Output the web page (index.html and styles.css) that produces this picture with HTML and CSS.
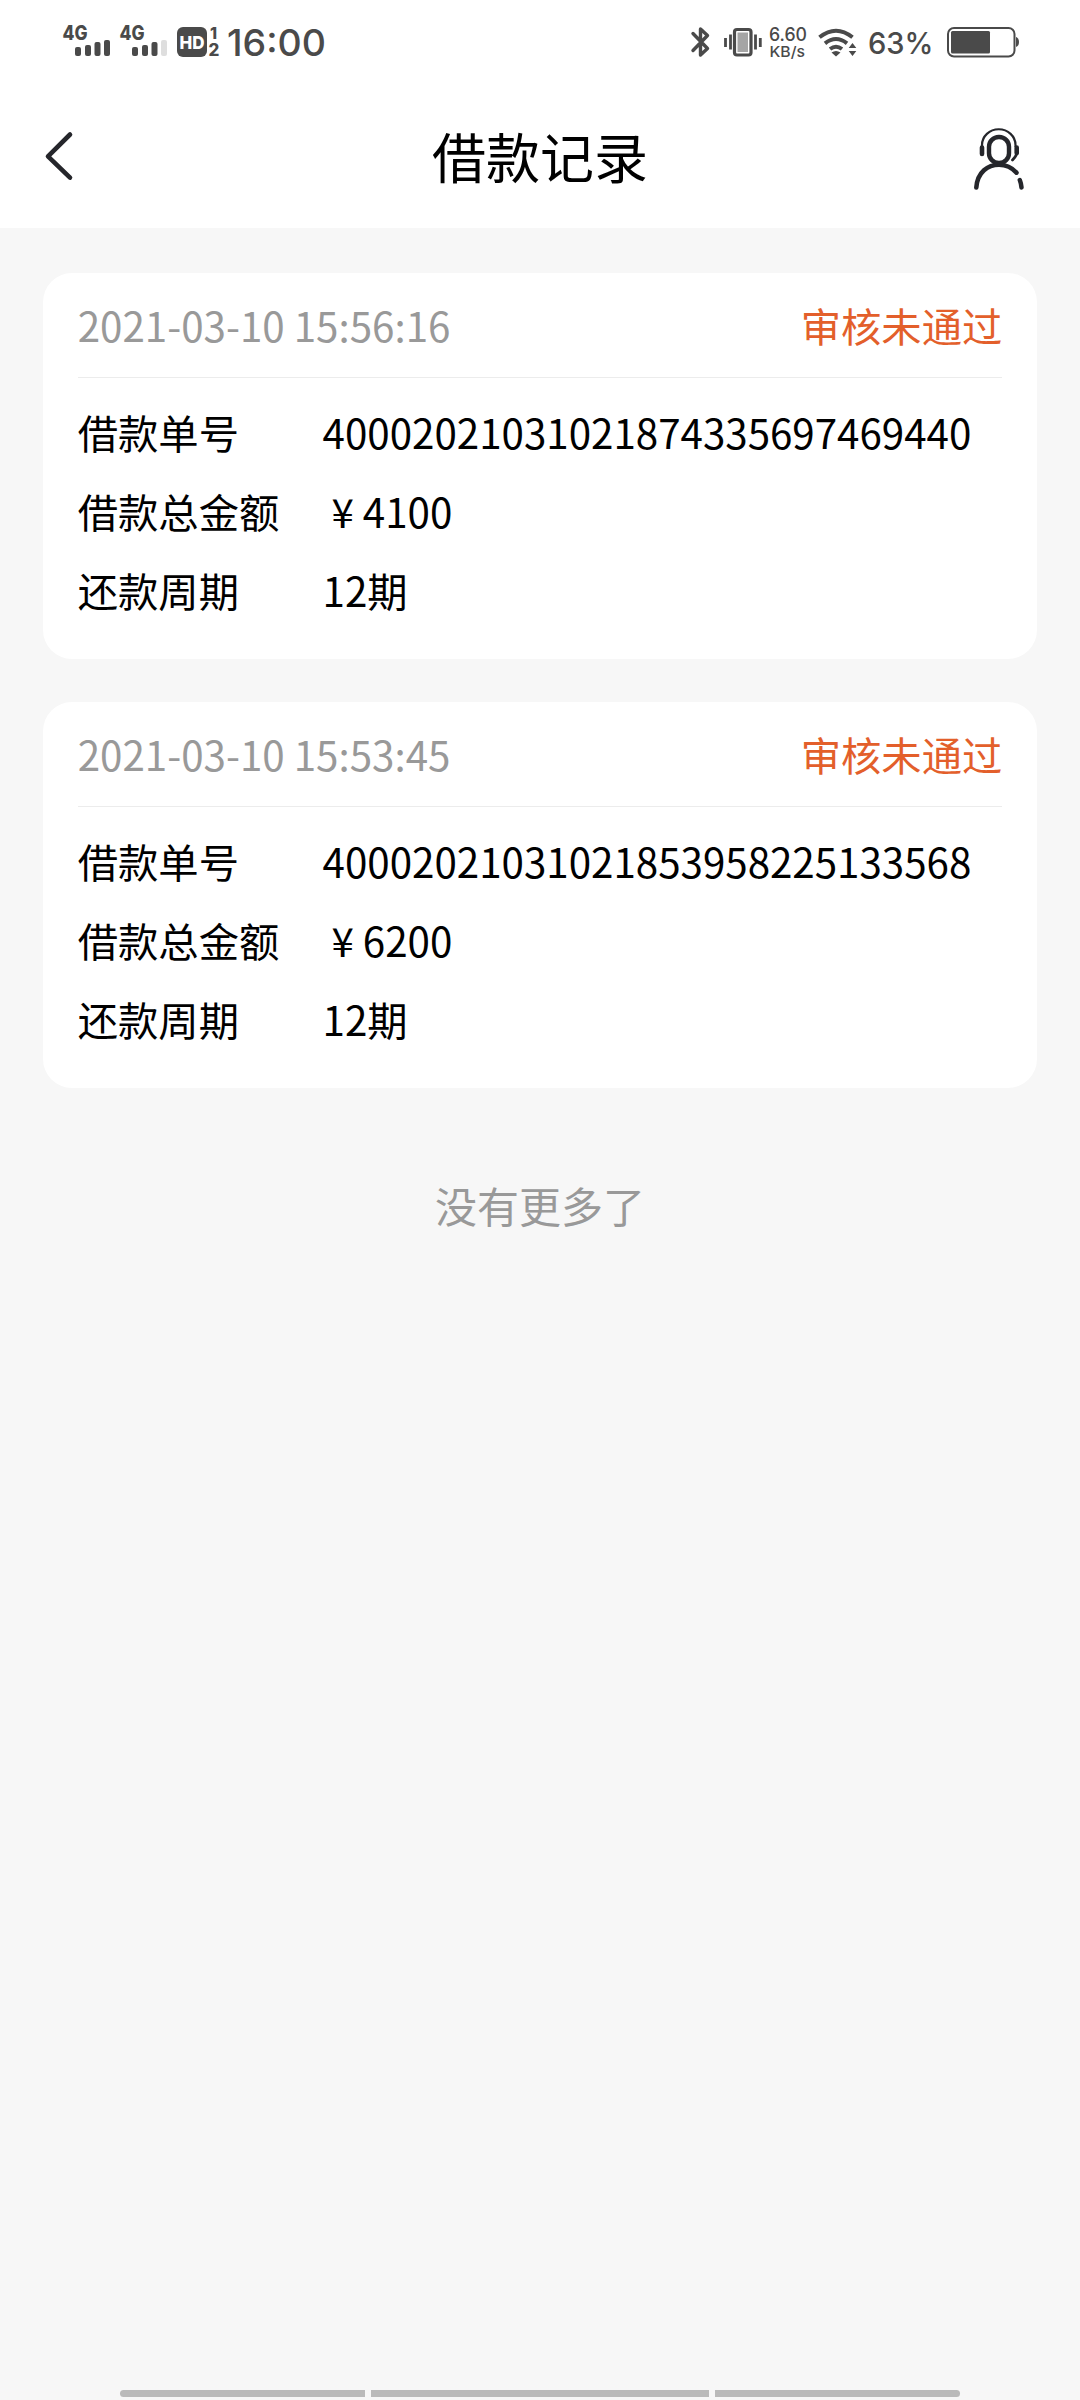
FILE: index.html
```html
<!DOCTYPE html>
<html lang="zh-CN">
<head>
<meta charset="utf-8">
<title>借款记录</title>
<link rel="stylesheet" href="styles.css">
</head>
<body>
<div class="screen">
  <div class="status-bar">
    <div class="status-group">
      <svg class="glyph" width="57" height="84" viewBox="60 0 57 84">
        <text class="tag" x="62.5" y="40" font-size="20" textLength="25" lengthAdjust="spacingAndGlyphs">4G</text>
        <rect x="75" y="47" width="6" height="9" rx="2"/><rect x="85" y="45" width="6" height="11" rx="2"/><rect x="94.500" y="42" width="6" height="14" rx="2"/><rect x="104" y="40" width="6" height="16" rx="2"/>
      </svg>
      <svg class="glyph" width="57" height="84" viewBox="117 0 57 84">
        <text class="tag" x="119.500" y="40" font-size="20" textLength="25" lengthAdjust="spacingAndGlyphs">4G</text>
        <rect x="132" y="47" width="6" height="9" rx="2"/><rect x="142" y="45" width="6" height="11" rx="2"/><rect x="151.500" y="42" width="6" height="14" rx="2"/><rect class="faint" x="161" y="40" width="6" height="16" rx="2"/>
      </svg>
      <svg class="glyph" width="52" height="84" viewBox="174 0 52 84">
        <rect x="177" y="27" width="30" height="30" rx="6"/>
        <text class="tag light" x="179.500" y="48.500" font-size="18" textLength="25" lengthAdjust="spacingAndGlyphs">HD</text>
        <text class="tag" x="210" y="39" font-size="16">1</text>
        <text class="tag" x="208.500" y="56" font-size="17">2</text>
      </svg>
      <svg class="glyph" width="104" height="84" viewBox="226 0 104 84">
        <text class="clock" x="227" y="55.500" font-size="37" textLength="99" lengthAdjust="spacingAndGlyphs">16:00</text>
      </svg>
    </div>
    <div class="status-group">
      <svg class="glyph" width="32" height="84" viewBox="686 0 32 84">
        <path class="line" stroke-width="3.400" stroke-linejoin="round" stroke-linecap="round" d="M693 33.500l14.500 15-7 6.500V29l7 6.500L693 50.500"/>
      </svg>
      <svg class="glyph" width="49" height="84" viewBox="718 0 49 84">
        <rect class="line" x="734.500" y="29.500" width="16.500" height="25.500" rx="2.500" stroke-width="3.200"/>
        <rect class="mid" x="737.500" y="32.500" width="10.500" height="19.500"/>
        <path class="line" stroke-width="2.800" d="M725.500 38v9M730.500 34.500v15M755.500 34.500v15M760.300 38v9"/>
      </svg>
      <svg class="glyph" width="45" height="84" viewBox="767 0 45 84">
        <text class="rate" x="769" y="40.500" font-size="18" textLength="38" lengthAdjust="spacingAndGlyphs">6.60</text>
        <text class="rate" x="769.500" y="56.500" font-size="15" textLength="35.500" lengthAdjust="spacingAndGlyphs">KB/s</text>
      </svg>
      <svg class="glyph" width="53" height="84" viewBox="812 0 53 84">
        <path class="line" stroke-width="4" d="M819.500 37.200q16.500-13 33 0M825 43.300q11-8.500 22 0M830 49q6-4.500 12 0"/>
        <path d="M831.500 52.500q4.500-3 9 0l-4.500 4z"/>
        <path d="M852.500 43l3.800 5h-7.600zM852.500 56l3.800-5h-7.600z"/>
      </svg>
      <svg class="glyph" width="77" height="84" viewBox="865 0 77 84">
        <text class="clock" x="868" y="54" font-size="30" textLength="65.500" lengthAdjust="spacingAndGlyphs">63%</text>
      </svg>
      <svg class="glyph" width="80" height="84" viewBox="942 0 80 84">
        <rect class="line" x="948" y="28" width="66.500" height="28.500" rx="6" stroke-width="2"/>
        <rect x="951" y="31" width="39" height="22.500" rx="1.500"/>
        <path d="M1016 37q3 1 3 5t-3 5z"/>
      </svg>
    </div>
  </div>

  <header class="nav">
    <svg class="nav-icon" width="80" height="100" viewBox="20 110 80 100">
      <path d="M70 134.500L48 156.300L70 177.600" stroke-width="4.600" stroke-linecap="round" stroke-linejoin="round"/>
    </svg>
    <h1 class="nav-title">借款记录</h1>
    <svg class="nav-icon" width="80" height="100" viewBox="960 110 80 100">
      <rect x="989" y="137" width="20" height="26" rx="9.800" stroke-width="4.400"/>
      <path d="M982 147v-2a16.500 15.500 0 0 1 33.500 0v2" stroke-width="2.200"/>
      <path d="M982 147.500v6.500M1016.700 147.500v5.500" stroke-width="4.600" stroke-linecap="round"/>
      <path d="M1017.500 152.500q-2 4.500-5 7.500" stroke-width="2.800" stroke-linecap="round"/>
      <path d="M976.300 187.500C977.500 172 988 164.700 999 164.700Q1009.500 164.700 1016.500 172.700M1019.800 180Q1021.300 184 1021.500 187.500" stroke-width="4.500" stroke-linecap="round"/>
    </svg>
  </header>

  <main class="list">
    <section class="card">
      <div class="card-head"><span class="date">2021-03-10 15:56:16</span><span class="state">审核未通过</span></div>
      <dl class="rows">
        <dt>借款单号</dt><dd>40002021031021874335697469440</dd>
        <dt>借款总金额</dt><dd><span class="yen">¥</span>4100</dd>
        <dt>还款周期</dt><dd>12期</dd>
      </dl>
    </section>
    <section class="card">
      <div class="card-head"><span class="date">2021-03-10 15:53:45</span><span class="state">审核未通过</span></div>
      <dl class="rows">
        <dt>借款单号</dt><dd>40002021031021853958225133568</dd>
        <dt>借款总金额</dt><dd><span class="yen">¥</span>6200</dd>
        <dt>还款周期</dt><dd>12期</dd>
      </dl>
    </section>
    <p class="end">没有更多了</p>
  </main>

  <div class="gesture-bar"><i></i><i></i><i></i></div>
</div>
</body>
</html>
```
FILE: styles.css
```css
* { box-sizing: border-box; }

body {
  margin: 0;
  background: #f7f7f7;
  color: #000;
  font-family: "Noto Sans CJK SC", sans-serif;
}

.screen {
  display: flex;
  flex-direction: column;
  width: 1080px;
  height: 2400px;
}

.status-bar {
  display: flex;
  justify-content: space-between;
  height: 84px;
  padding: 0 58px 0 60px;
  background: #fff;
}

.status-group { display: flex; }

.glyph {
  display: block;
  flex: none;
  fill: #4a4a4a;
  font-family: Inter, sans-serif;
}

.glyph .line { fill: none; stroke: #4a4a4a; }
.glyph .mid { fill: #a5a5a5; }
.glyph .faint { fill: #dedede; }
.tag { font-weight: 800; }
.glyph .light { fill: #fff; }
.clock { font-weight: 500; }
.rate { font-weight: 500; }

.nav {
  display: flex;
  align-items: flex-start;
  justify-content: space-between;
  height: 144px;
  padding: 26px 40px 0 20px;
  background: #fff;
}

.nav-icon {
  display: block;
  fill: none;
  stroke: #25262b;
}

.nav-title {
  margin: 0;
  padding: 6px 0 0 20px;
  font-size: 54px;
  font-weight: 400;
  line-height: 80px;
}

.list {
  flex: 1;
  padding: 45px 43.2px 0;
}

.card {
  height: 386px;
  margin-bottom: 43px;
  padding: 0 34.56px;
  border-radius: 29px;
  background: #fff;
  font-size: 40.32px;
}

.card-head {
  display: flex;
  justify-content: space-between;
  height: 105px;
  border-bottom: 1px solid #ececec;
  line-height: 104px;
}

.date { color: #999; }
.state { color: #e35f2b; }

.rows {
  display: grid;
  grid-template-columns: 244.8px 1fr;
  grid-auto-rows: 79.2px;
  margin: 0;
  padding-top: 14px;
  line-height: 79.2px;
}

.rows dd { margin: 0; }

.yen {
  display: inline-block;
  width: 1em;
  text-align: center;
}

.end {
  margin: 84px 0 0;
  color: #999;
  font-size: 42px;
  line-height: 66px;
  text-align: center;
}

.gesture-bar {
  display: grid;
  grid-template-columns: 245px 338px 245px;
  gap: 6px;
  justify-content: center;
  height: 10px;
  padding-bottom: 3px;
}

.gesture-bar i { background: #bababa; }
.gesture-bar i:first-child { border-radius: 4px 0 0 4px; }
.gesture-bar i:last-child { border-radius: 0 4px 4px 0; }
```
